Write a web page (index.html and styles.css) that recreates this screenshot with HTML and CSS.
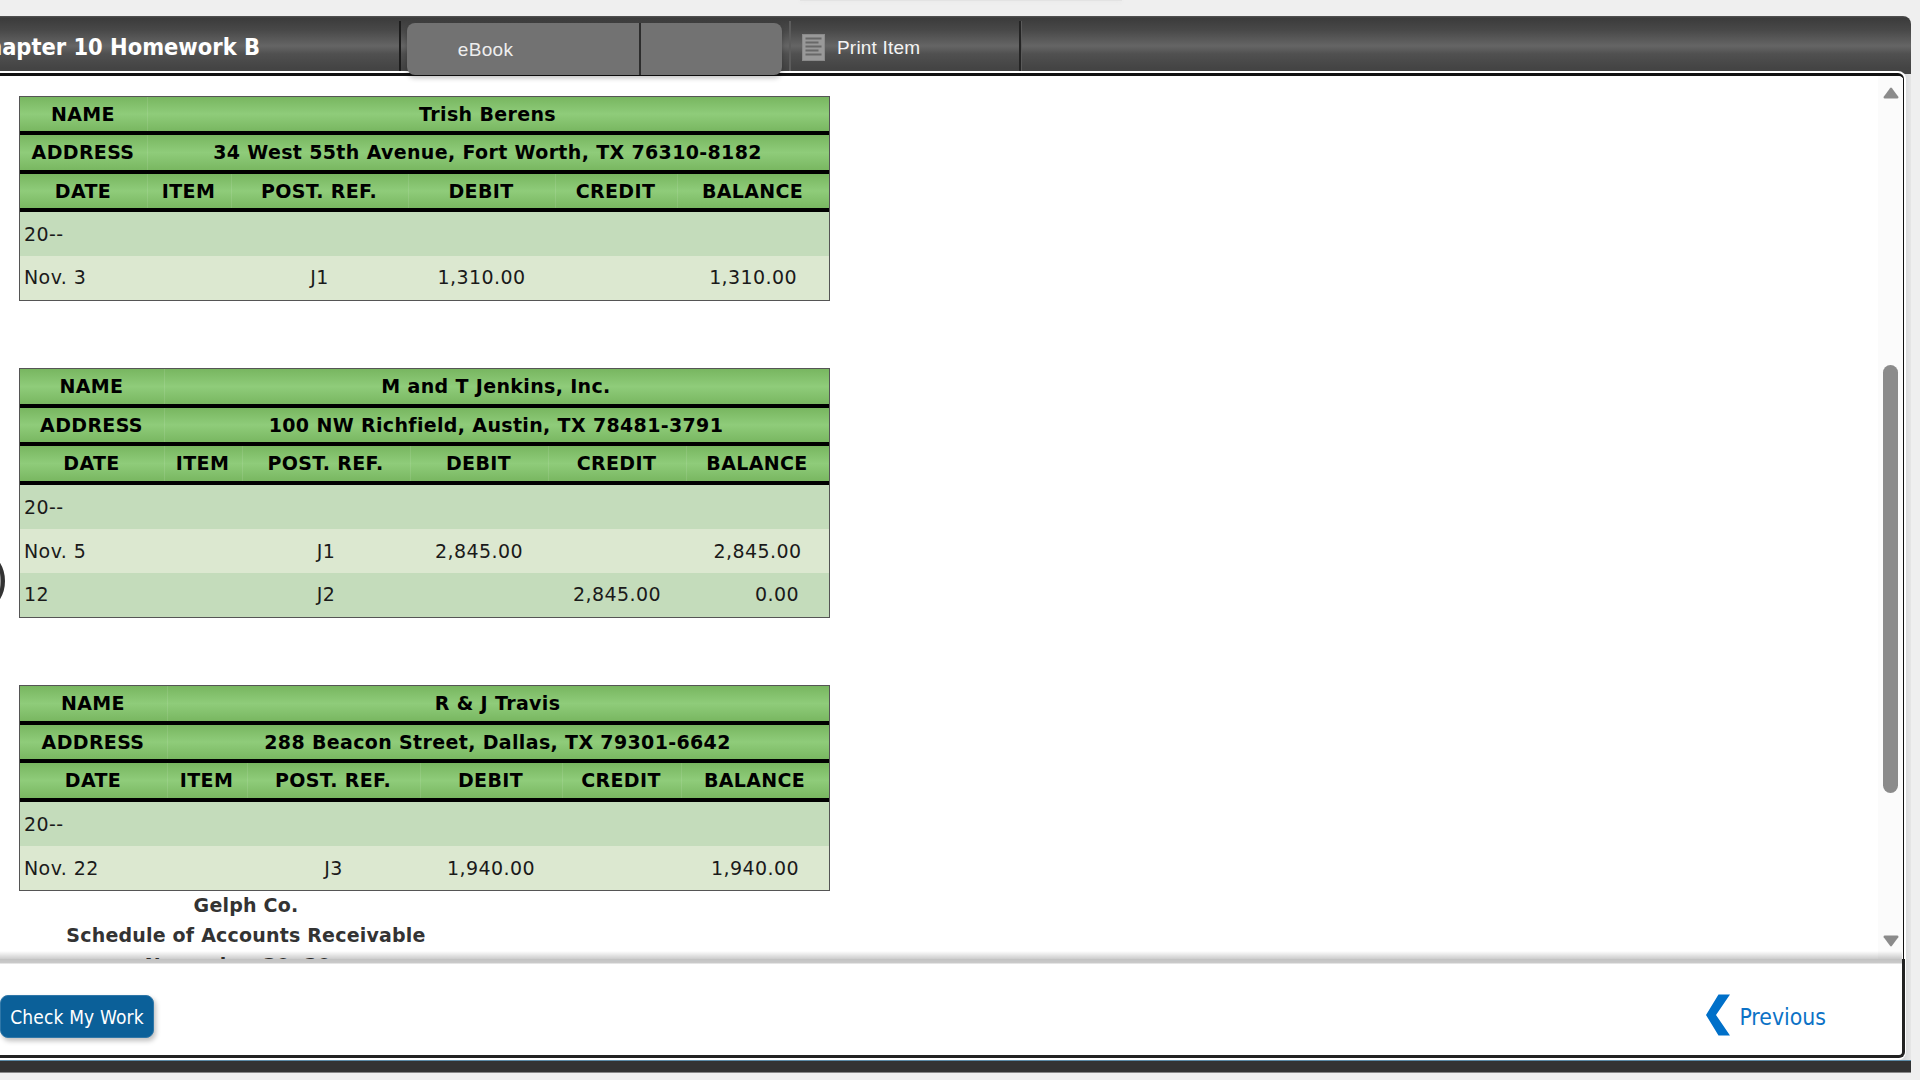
FILE: index.html
```html
<!DOCTYPE html>
<html lang="en">
<head>
  <meta charset="UTF-8">
  <meta name="viewport" content="width=device-width, initial-scale=1.0">
  <title>Chapter 10 Homework B</title>
  <link rel="stylesheet" href="styles.css">
</head>
<body>
  <div class="window-tab"></div>
  <div class="frame">
    <header class="header">
      <div class="title"><span>Chapter 10 Homework B</span></div>
      <div class="ebook-group">
        <a class="ebook-tab">eBook</a>
        <span class="ebook-extra"></span>
      </div>
      <div class="print-item">
        <!-- Page Icon -->
        <svg width="23" height="27" viewBox="0 0 23 27"><rect x="0.5" y="0.5" width="22" height="26" fill="#999" stroke="#8a8a8a"/><path d="M3.5 4.5h16M3.5 8.5h13M3.5 12.5h16M3.5 16.5h13M3.5 20.5h16" stroke="#686868" stroke-width="1.8"/></svg>
        <span>Print Item</span>
      </div>
    </header>

    <main class="panel">
      <div class="viewport">
        <div class="content">
          <table class="ledger berens">
            <colgroup><col><col><col><col><col><col></colgroup>
            <thead>
              <tr><th>NAME</th><th colspan="5">Trish Berens</th></tr>
              <tr><th>ADDRESS</th><th colspan="5">34 West 55th Avenue, Fort Worth, TX 76310-8182</th></tr>
              <tr><th>DATE</th><th>ITEM</th><th>POST. REF.</th><th>DEBIT</th><th>CREDIT</th><th>BALANCE</th></tr>
            </thead>
            <tbody>
              <tr><td>20--</td><td></td><td></td><td></td><td></td><td></td></tr>
              <tr><td>Nov. 3</td><td></td><td>J1</td><td>1,310.00</td><td></td><td>1,310.00</td></tr>
            </tbody>
          </table>

          <table class="ledger jenkins">
            <colgroup><col><col><col><col><col><col></colgroup>
            <thead>
              <tr><th>NAME</th><th colspan="5">M and T Jenkins, Inc.</th></tr>
              <tr><th>ADDRESS</th><th colspan="5">100 NW Richfield, Austin, TX 78481-3791</th></tr>
              <tr><th>DATE</th><th>ITEM</th><th>POST. REF.</th><th>DEBIT</th><th>CREDIT</th><th>BALANCE</th></tr>
            </thead>
            <tbody>
              <tr><td>20--</td><td></td><td></td><td></td><td></td><td></td></tr>
              <tr><td>Nov. 5</td><td></td><td>J1</td><td>2,845.00</td><td></td><td>2,845.00</td></tr>
              <tr><td>12</td><td></td><td>J2</td><td></td><td>2,845.00</td><td class="zero">0.00</td></tr>
            </tbody>
          </table>

          <table class="ledger travis">
            <colgroup><col><col><col><col><col><col></colgroup>
            <thead>
              <tr><th>NAME</th><th colspan="5">R &amp; J Travis</th></tr>
              <tr><th>ADDRESS</th><th colspan="5">288 Beacon Street, Dallas, TX 79301-6642</th></tr>
              <tr><th>DATE</th><th>ITEM</th><th>POST. REF.</th><th>DEBIT</th><th>CREDIT</th><th>BALANCE</th></tr>
            </thead>
            <tbody>
              <tr><td>20--</td><td></td><td></td><td></td><td></td><td></td></tr>
              <tr><td>Nov. 22</td><td></td><td>J3</td><td>1,940.00</td><td></td><td>1,940.00</td></tr>
            </tbody>
          </table>

          <div class="schedule">
            <div>Gelph Co.</div>
            <div>Schedule of Accounts Receivable</div>
            <div>November 30, 20--</div>
          </div>
        </div>

        <div class="scrollbar">
          <svg width="16" height="12" viewBox="0 0 16 12"><path d="M7 1.2Q8 0 9 1.2L15.3 9.8Q16 11.6 14.4 11.6H1.6Q0 11.6 0.7 9.8Z" fill="#8b8b8b"/></svg>
          <div class="thumb"></div>
          <svg class="down" width="16" height="12" viewBox="0 0 16 12"><path d="M7 10.8Q8 12 9 10.8L15.3 2.2Q16 0.4 14.4 0.4H1.6Q0 0.4 0.7 2.2Z" fill="#8b8b8b"/></svg>
        </div>
      </div>

      <footer class="footer">
        <button type="button" class="check-btn">Check My Work</button>
        <a class="previous">
          <!-- Chevron Icon -->
          <svg width="24" height="42" viewBox="0 0 24 42"><path d="M12.5 0.5H24L10 21L24 41.5H12.5L0 21Z" fill="#0070c9"/></svg>
          <span>Previous</span>
        </a>
      </footer>
    </main>
    <div class="bottom-bar"></div>
  </div>
  <div class="side-handle"></div>
</body>
</html>
```
FILE: styles.css
```css
* { box-sizing: border-box; }
body {
  margin: 0;
  width: 1920px;
  height: 1080px;
  overflow: hidden;
  position: relative;
  background: #efefef;
  font-family: "DejaVu Sans", Verdana, sans-serif;
  font-size: 19px;
}
.window-tab {
  width: 322px;
  height: 1px;
  margin-left: 800px;
  background: #e3e3e3;
  box-shadow: 0 0 5px #ddd;
}
.frame {
  margin-top: 15px;
  width: 1911px;
  height: 1057px;
  display: flex;
  flex-direction: column;
  background: linear-gradient(90deg, #d9dadc 1905px, #e6e6e6);
  border-radius: 0 8px 0 0;
}

/* Header */
.header {
  height: 58px;
  flex: none;
  display: flex;
  padding-top: 5px;
  background: linear-gradient(#555 0, #3b3b3b 2px, #484848 14px, #656565 30px, #505050 38px, #444 52px, #444 100%);
  border-radius: 0 8px 0 0;
}
.title {
  width: 401px;
  height: 52px;
  padding: 12px 139px 0 0;
  border-right: 2px solid #1c1c1c;
  display: flex;
  justify-content: flex-end;
  white-space: nowrap;
  color: #fff;
  font: bold 23.4px/28px "DejaVu Sans Condensed", Tahoma, sans-serif;
}
.ebook-group {
  display: flex;
  position: relative;
  z-index: 2;
  width: 375px;
  height: 52px;
  margin: 2px 7px 0 6px;
  border-radius: 8px;
  background: #727272;
  box-shadow: 0 3px 5px rgba(0, 0, 0, 0.25);
  color: #eee;
}
.ebook-tab {
  width: 234px;
  padding: 0 76px 0 1px;
  text-align: center;
  border-right: 2px solid #2c2c2c;
  font: 19px/53px "Liberation Sans", Arial, sans-serif;
  letter-spacing: 0.3px;
}
.print-item {
  width: 232px;
  height: 52px;
  display: flex;
  align-items: flex-start;
  gap: 12px;
  padding: 13px 0 0 11px;
  border-left: 2px solid #5c5c5c;
  border-right: 2px solid #242424;
  box-shadow: 1px 0 #5a5a5a;
  color: #f4f4f4;
  font: 19px/28px "Liberation Sans", Arial, sans-serif;
  letter-spacing: 0.2px;
}

/* Panel */
.panel {
  position: relative;
  width: 1906px;
  margin-top: -3px;
  height: 989px;
  flex: none;
  display: flex;
  flex-direction: column;
  background: #fff;
  border: 2px solid #fff;
  border-left: none;
  border-radius: 0 8px 8px 0;
}
.viewport {
  height: 886px;
  flex: none;
  display: flex;
  overflow: hidden;
  border-top: 3px solid #111;
  border-right: 1px solid #111;
  border-radius: 0 6px 0 0;
}
.content {
  flex: 1;
  height: 883px;
  overflow: hidden;
  padding: 20px 0 0 19px;
}
.ledger {
  width: 811px;
  table-layout: fixed;
  border: 1px solid #555;
  border-collapse: separate;
  border-spacing: 0;
  margin-bottom: 67px;
}
.ledger th {
  height: 39px;
  padding: 0 1px 1px 0;
  border-bottom: 4px solid #000;
  background: linear-gradient(#78b660, #8fcc7a 50%, #79b761);
  background-clip: padding-box;
  color: #000;
  letter-spacing: 0.35px;
  line-height: 22px;
}
.ledger th + th { box-shadow: inset 1px 0 rgba(255, 255, 255, 0.1); }
.ledger tr:nth-child(2) th { height: 38px; }
.ledger td {
  height: 44px;
  padding: 0 0 1px;
  text-align: center;
  color: #1a1a1a;
  letter-spacing: 0.4px;
  line-height: 22px;
  background: #c4dcbb;
}
.ledger tr:nth-child(even) td { background: #dce8d0; }
.ledger td:first-child { text-align: left; padding-left: 4px; }
.ledger td.zero { padding-left: 39px; }

.berens tr th { height: 38px; }
.berens tr:nth-child(2) th { height: 39px; padding-bottom: 2px; }
.berens tr:nth-child(2) td { padding-bottom: 3px; }
.berens col:nth-child(1) { width: 127px; }
.berens col:nth-child(2) { width: 84px; }
.berens col:nth-child(3) { width: 177px; }
.berens col:nth-child(4) { width: 147px; }
.berens col:nth-child(5) { width: 122px; }
.berens col:nth-child(6) { width: 152px; }

.jenkins tr:nth-child(3) td { padding-bottom: 3px; }
.jenkins col:nth-child(1) { width: 144px; }
.jenkins col:nth-child(2) { width: 78px; }
.jenkins col:nth-child(3) { width: 168px; }
.jenkins col:nth-child(4) { width: 138px; }
.jenkins col:nth-child(5) { width: 138px; }
.jenkins col:nth-child(6) { width: 143px; }

.travis { margin-bottom: 0; }
.travis col:nth-child(1) { width: 147px; }
.travis col:nth-child(2) { width: 80px; }
.travis col:nth-child(3) { width: 173px; }
.travis col:nth-child(4) { width: 142px; }
.travis col:nth-child(5) { width: 119px; }
.travis col:nth-child(6) { width: 148px; }

.schedule {
  width: 454px;
  margin-top: -1px;
  text-align: center;
  font-weight: bold;
  line-height: 30px;
  letter-spacing: 0.2px;
  color: #333;
  white-space: nowrap;
}

/* Scrollbar */
.scrollbar {
  width: 25px;
  height: 883px;
  display: flex;
  flex-direction: column;
  align-items: center;
  padding: 11px 0 12px;
  background: #fbfbfb;
}
.thumb {
  width: 15px;
  height: 428px;
  margin-top: 266px;
  border-radius: 8px;
  background: #8b8b8b;
}
.down { margin-top: auto; }

/* Footer */
.footer {
  position: relative;
  flex: 1;
  display: flex;
  justify-content: space-between;
  align-items: flex-start;
  width: 1905px;
  padding: 36px 76px 0 0;
  background: linear-gradient(#c2c2c2, #cacaca 4px, #fff 5px);
  border-right: 3px solid #222;
  border-bottom: 3px solid #222;
  border-radius: 0 0 6px 0;
}
.footer::before {
  content: "";
  position: absolute;
  left: 0;
  right: 0;
  top: -8px;
  height: 8px;
  background: linear-gradient(rgba(0, 0, 0, 0), rgba(0, 0, 0, 0.2));
}
.check-btn {
  width: 154px;
  height: 43px;
  padding: 0;
  border: 1px solid #2f77a8;
  border-radius: 8px;
  background: #0b6099;
  box-shadow: 2px 3px 5px rgba(0, 0, 0, 0.25);
  color: #fff;
  font: 19px "DejaVu Sans Condensed", Tahoma, sans-serif;
  letter-spacing: 0.15px;
}
.previous {
  display: flex;
  align-items: flex-start;
  gap: 9px;
  margin-top: -1px;
  color: #0c72c6;
  font: 22.8px/42px "DejaVu Sans Condensed", Tahoma, sans-serif;
}
.previous span { padding-top: 2px; }

.bottom-bar {
  height: 13px;
  flex: none;
  background: #333;
  border-top: 1px solid #5d8ca8;
  border-bottom: 1px solid #888;
}

/* Round handle, mostly off the left edge */
.side-handle {
  position: absolute;
  left: -65px;
  top: 546px;
  width: 70px;
  height: 70px;
  border: 4px solid #333;
  border-radius: 50%;
  background: #999;
}
```
